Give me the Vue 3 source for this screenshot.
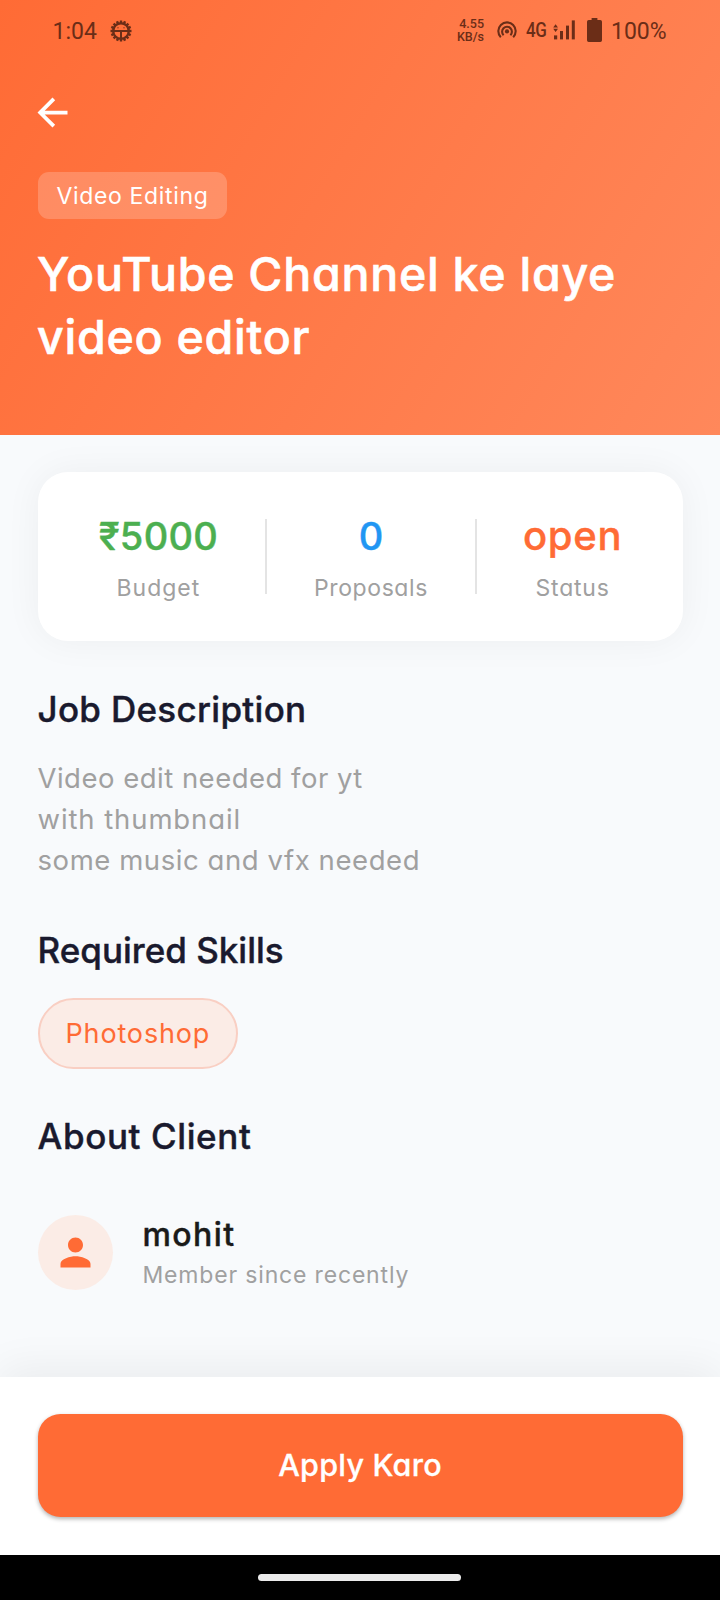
<script setup>
const stats = [
  { key: 'budget', value: '₹5000', label: 'Budget' },
  { key: 'proposals', value: '0', label: 'Proposals' },
  { key: 'status', value: 'open', label: 'Status' },
]
const description = [
  { id: 'a', text: 'Video edit needed for yt' },
  { id: 'b', text: 'with thumbnail' },
  { id: 'c', text: 'some music and vfx needed' },
]
const skills = ['Photoshop']
const gearTeeth = Array.from({ length: 16 }, (_, i) => i * 22.5)
</script>

<template>
  <div class="screen">
    <header class="hero">
      <div class="statusbar">
        <span class="clock">1:04</span>
        <svg class="gear" width="22" height="22" viewBox="-11 -11 22 22">
          <rect v-for="a in gearTeeth" :key="a" x="-1.2" y="-10.5" width="2.4" height="3" :transform="`rotate(${a})`" fill="currentColor" />
          <circle r="7.8" fill="none" stroke="currentColor" stroke-width="2.4" />
          <path d="M-8 0H8M0 0V8" fill="none" stroke="currentColor" stroke-width="2" />
          <path d="M-3.6 -3.2h1.2M2.4 -3.2h1.2" stroke="currentColor" stroke-width="1" />
        </svg>
        <div class="speed"><span>4.55</span><span>KB/s</span></div>
        <svg class="hotspot" width="20" height="20" viewBox="-10 -10 20 20" fill="none" stroke="currentColor" stroke-width="2.1">
          <circle cy="0.4" r="2.1" fill="currentColor" stroke="none" />
          <path d="M-3.4 4.2A4.9 4.9 0 1 1 3.4 4.2" />
          <path d="M-6.2 6.2A8.7 8.7 0 1 1 6.2 6.2" />
        </svg>
        <span class="net">4G</span>
        <svg class="signal" width="23" height="20" viewBox="0 0 23 20" fill="currentColor">
          <path d="M0.2 7.5L2.6 4.2L5 7.5ZM0.2 8.7L2.6 12L5 8.7Z" />
          <rect x="1" y="15.4" width="3.2" height="4" />
          <rect x="7" y="11" width="3" height="8.4" />
          <rect x="13" y="5.6" width="3" height="13.8" />
          <rect x="18.8" y="0.4" width="3" height="19" />
        </svg>
        <svg class="battery" width="15" height="24" viewBox="0 0 15 24" fill="currentColor">
          <path d="M4.6 0h5.8v2h2.9A1.7 1.7 0 0 1 15 3.7v18.6A1.7 1.7 0 0 1 13.3 24H1.7A1.7 1.7 0 0 1 0 22.3V3.7A1.7 1.7 0 0 1 1.7 2h2.9z" />
        </svg>
        <span class="percent">100%</span>
      </div>
      <svg class="back" width="45" height="45" viewBox="0 0 24 24" fill="#fff">
        <path d="M20 11H7.83l5.59-5.59L12 4l-8 8 8 8 1.41-1.41L7.83 13H20v-2z" />
      </svg>
      <div class="tag">Video Editing</div>
      <h1 class="title">YouTube Channel ke laye<br />video editor</h1>
    </header>

    <main class="body">
      <section class="card">
        <template v-for="(s, i) in stats" :key="s.key">
          <div v-if="i" class="divider"></div>
          <div class="stat" :class="s.key">
            <div class="value">{{ s.value }}</div>
            <div class="label">{{ s.label }}</div>
          </div>
        </template>
      </section>

      <h2 class="heading job">Job Description</h2>
      <div class="desc">
        <p v-for="d in description" :key="d.id" :class="d.id">{{ d.text }}</p>
      </div>

      <h2 class="heading skills-h">Required Skills</h2>
      <div class="chips">
        <span v-for="s in skills" :key="s" class="chip">{{ s }}</span>
      </div>

      <h2 class="heading about-h">About Client</h2>
      <div class="client">
        <div class="avatar">
          <svg width="45" height="45" viewBox="0 0 24 24" fill="#ff6b35">
            <path d="M12 12c2.21 0 4-1.79 4-4s-1.79-4-4-4-4 1.79-4 4 1.79 4 4 4zm0 2c-2.67 0-8 1.34-8 4v2h16v-2c0-2.66-5.33-4-8-4z" />
          </svg>
        </div>
        <div>
          <div class="name">mohit</div>
          <div class="since">Member since recently</div>
        </div>
      </div>
    </main>

    <footer class="actions">
      <button class="apply">Apply Karo</button>
    </footer>
    <div class="navbar"><div class="pill"></div></div>
  </div>
</template>

<style scoped>
.screen {
  width: 720px;
  height: 1600px;
  display: flex;
  flex-direction: column;
  overflow: hidden;
  background: #f8fafc;
  font-family: Inter, "Noto Sans", sans-serif;
  font-feature-settings: "cv11";
  white-space: nowrap;
}
.hero {
  box-sizing: border-box;
  height: 435px;
  flex: none;
  background: linear-gradient(121deg, #ff6b35, #ff885b);
  color: #fff;
}
.statusbar {
  height: 60px;
  display: flex;
  align-items: center;
  padding-left: 52.5px;
  color: #6b2d17;
  font-family: Roboto, sans-serif;
}
.clock { width: 57.5px; font-size: 23px; line-height: 28px; margin-top: 3px; }
.gear { margin-top: 1px; }
.speed {
  width: 27px;
  margin-left: 325px;
  display: flex;
  flex-direction: column;
  align-items: flex-end;
  font-size: 12.5px;
  line-height: 13px;
  font-weight: 500;
}
.hotspot { margin: 1px 0 0 13px; }
.net {
  width: 28px;
  margin: 0 0 0 9px;
  font-size: 20px;
  font-weight: 500;
  line-height: 24px;
  letter-spacing: -0.5px;
  transform: scaleX(0.85);
  transform-origin: left;
}
.signal { margin: 0 0 1px -1px; }
.battery { margin-left: 11px; }
.percent { margin: 3px 0 0 9px; font-size: 23px; line-height: 28px; }
.back { display: block; margin: 30px 0 0 30px; }
.tag {
  box-sizing: border-box;
  width: 189.5px;
  height: 47px;
  margin: 37px 0 0 37.5px;
  padding: 1px 0 0 19px;
  border-radius: 11px;
  background: rgba(255, 255, 255, 0.2);
  font-size: 23px;
  font-weight: 400;
  line-height: 47px;
  letter-spacing: 0.65px;
}
.title {
  margin: 24.4px 0 0 37px;
  font-size: 46.5px;
  font-weight: 500;
  line-height: 62.5px;
  letter-spacing: 0.75px;
  -webkit-text-stroke: 0.6px currentColor;
}
.body { flex: 1; padding: 37px 37.5px 0; }
.card {
  box-sizing: border-box;
  height: 169px;
  padding: 0 37.5px;
  display: flex;
  justify-content: space-around;
  align-items: center;
  border-radius: 30px;
  background: #fff;
  box-shadow: 0 0 37px rgba(0, 0, 0, 0.05);
}
.divider { width: 2px; height: 75px; background: #e4e4e4; }
.stat { display: flex; flex-direction: column; align-items: center; gap: 6px; }
.value { font-size: 38px; font-weight: 500; line-height: 56px; -webkit-text-stroke: 0.4px currentColor; }
.label { font-size: 23px; font-weight: 400; line-height: 36px; letter-spacing: 0.6px; color: #a0a0a0; }
.budget { width: 121px; }
.budget .value { color: #4caf50; letter-spacing: 0.3px; }
.budget .label { letter-spacing: 1px; }
.proposals { width: 117px; }
.proposals .value { color: #2196f3; }
.status { width: 99px; }
.status .value { color: #ff6b35; font-size: 40px; letter-spacing: 0.7px; }
.status .label { letter-spacing: 0.8px; }
.heading {
  margin: 0;
  font-size: 35px;
  font-weight: 500;
  line-height: 50px;
  color: #1a1a2e;
  -webkit-text-stroke: 0.4px currentColor;
}
.job { margin-top: 42.8px; letter-spacing: 0.3px; }
.skills-h { margin-top: 43.4px; letter-spacing: 0; }
.about-h { margin-top: 42.4px; letter-spacing: 0.6px; }
.desc { margin-top: 24.4px; color: #a0a0a0; font-size: 27.5px; font-weight: 400; line-height: 41px; }
.desc p { margin: 0; }
.desc .a { letter-spacing: 0.49px; }
.desc .b { letter-spacing: 0.9px; }
.desc .c { letter-spacing: 0.57px; }
.chips { display: flex; margin-top: 23px; }
.chip {
  box-sizing: border-box;
  width: 200.5px;
  height: 71px;
  padding-left: 26px;
  border: 2px solid #f9cfc3;
  border-radius: 36px;
  background: #fbece6;
  color: #ff6b35;
  font-size: 27px;
  font-weight: 400;
  line-height: 67px;
  letter-spacing: 0.85px;
}
.client { display: flex; align-items: center; gap: 30px; height: 75px; margin-top: 54px; }
.avatar {
  width: 75px;
  height: 75px;
  display: flex;
  align-items: center;
  justify-content: center;
  border-radius: 50%;
  background: #fbece6;
}
.name {
  font-size: 32px;
  font-weight: 500;
  line-height: 44px;
  letter-spacing: 1.4px;
  color: #1a1a1a;
  -webkit-text-stroke: 0.4px currentColor;
}
.since { margin-top: 1px; font-size: 23px; font-weight: 400; line-height: 34px; letter-spacing: 0.83px; color: #a0a0a0; }
.actions {
  box-sizing: border-box;
  flex: none;
  height: 178.5px;
  padding: 37.5px;
  background: #fff;
  box-shadow: 0 -9px 40px rgba(0, 0, 0, 0.06);
}
.apply {
  display: block;
  width: 100%;
  height: 103px;
  padding: 0 0 1px;
  border: 0;
  border-radius: 22.5px;
  background: #ff6b35;
  box-shadow: 0 2px 4px rgba(0, 0, 0, 0.3);
  color: #fff;
  font: 500 30.5px/102px Inter, sans-serif;
  font-feature-settings: "cv11";
  letter-spacing: 0.25px;
  -webkit-text-stroke: 0.3px currentColor;
}
.navbar { flex: none; height: 45px; display: flex; justify-content: center; background: #000; }
.pill { width: 203px; height: 7.5px; margin: 18.5px 1px 0 0; border-radius: 4px; background: #ebebeb; }
</style>

<style>
body { background: #f8fafc; }
</style>
